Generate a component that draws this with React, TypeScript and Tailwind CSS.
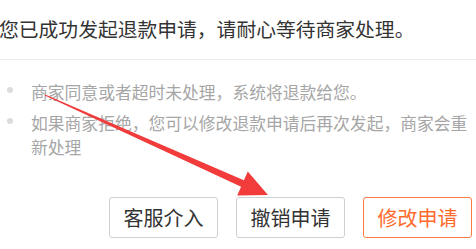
export default function App() {
  const tips = [
    '商家同意或者超时未处理，系统将退款给您。',
    '如果商家拒绝，您可以修改退款申请后再次发起，商家会重新处理',
  ];

  return (
    <div
      className="relative w-[476px] h-[249px] overflow-hidden bg-white"
      style={{ fontFamily: '"Noto Sans CJK SC", "Noto Sans", sans-serif' }}
    >
      {/* Header */}
      <div className="h-[60px] border-b border-[#eeeeee] pt-[15px]">
        <p className="-ml-[1px] text-[19.8px] leading-[28px] text-[#333333]">
          您已成功发起退款申请，请耐心等待商家处理。
        </p>
      </div>

      {/* Tips */}
      <ul className="mt-[20px] flex flex-col gap-[7px]">
        {tips.map((t) => (
          <li key={t} className="flex">
            <span className="ml-[7px] mt-[7px] h-[6px] w-[6px] shrink-0 rounded-full bg-[#dcdcdc]" />
            <span className="ml-[18px] w-[444px] text-[16.8px] leading-[24px] text-[#a6a6a6]">{t}</span>
          </li>
        ))}
      </ul>

      {/* Buttons */}
      <div className="mt-[38px] flex justify-end gap-[18px] pr-[4px]">
        <button className="h-[41px] w-[109px] rounded-[3px] border-[1.5px] border-[#cfcfcf] text-[20px] text-[#333333]">
          客服介入
        </button>
        <button className="h-[41px] w-[109px] rounded-[3px] border-[1.5px] border-[#cfcfcf] text-[20px] text-[#333333]">
          撤销申请
        </button>
        <button className="h-[41px] w-[109px] rounded-[3px] border-[1.5px] border-[#ff7d45] text-[20px] text-[#ff6a2b]">
          修改申请
        </button>
      </div>

      {/* Annotation arrow */}
      <svg className="pointer-events-none absolute left-0 top-0" width="476" height="249">
        <polygon
          points="45.2,94.4 243.9,180.3 247.8,171.6 268,195 237.2,195.4 241.1,186.7 44.8,95.6"
          fill="#f23b3b"
        />
      </svg>
    </div>
  );
}
